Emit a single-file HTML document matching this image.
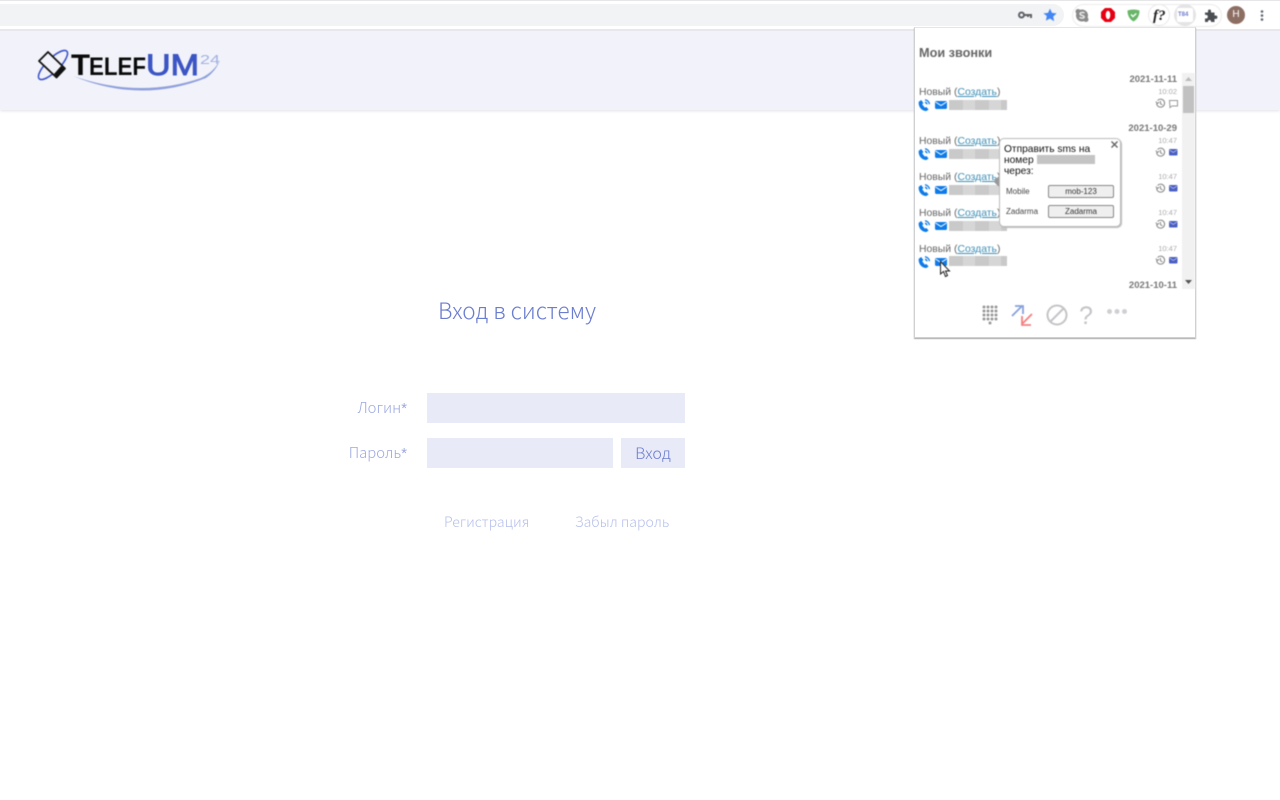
<!DOCTYPE html>
<html lang="ru"><head><meta charset="utf-8"><title>Вход в систему</title>
<style>
html,body{margin:0;padding:0;width:1280px;height:800px;overflow:hidden;background:#fff;font-family:"Liberation Sans",sans-serif}
.a{position:absolute}
.t{position:absolute;white-space:nowrap;line-height:1}
.f{background:#e8eaf7}
.n{font-family:'Noto Sans CJK JP','Liberation Sans',sans-serif;font-weight:300}
.s{font-family:'Liberation Sans',sans-serif}
.g{color:#666;font-size:10.4px}
.l{color:#3f8fb5;text-decoration:underline}
.d{color:#777;font-size:9.5px;font-weight:bold}
.h{color:#aaa;font-size:7.5px}
.r{background:repeating-linear-gradient(90deg,#c9c9c9 0 14px,#d6d6d6 14px 26px);height:10px}
svg{position:absolute;overflow:visible}
.b{position:absolute;left:0;top:0;width:1280px;height:800px}
.b1{filter:blur(.45px)}
</style></head><body>
<!-- browser chrome -->
<div class="a" style="left:0;top:0;width:1280px;height:1px;background:#e6e6e8"></div>
<div class="a" style="left:0;top:4px;width:1064px;height:22px;background:#f1f3f4;border-radius:0 12px 12px 0"></div>
<div class="a" style="left:0;top:29px;width:1280px;height:2px;background:#e8e9ed"></div>
<div class="b b1">
<div class="a" style="left:1072px;top:4px;width:150px;height:23px;border:1px solid #ebebeb;border-radius:13px;box-sizing:border-box"></div>
<svg style="left:1018px;top:10px" width="14" height="10"><circle cx="3.500" cy="5" r="2.500" fill="none" stroke="#5f6368" stroke-width="2"/><path d="M6 5h7v3M10 5v2" fill="none" stroke="#5f6368" stroke-width="2"/></svg>
<svg style="left:1043px;top:8px" width="14" height="14" viewBox="0 0 24 24"><path d="M12 1l3.400 7.300 7.900 1-5.800 5.500 1.500 7.900L12 18l-7 3.700 1.500-7.900L.7 9.300l7.900-1z" fill="#4285f4"/></svg>
<svg style="left:1075px;top:8px" width="14" height="15" viewBox="0 0 14 15"><circle cx="7" cy="7.500" r="6" fill="#8a8a8a"/><circle cx="3" cy="3.500" r="2.500" fill="#8a8a8a"/><circle cx="11" cy="11.500" r="2.500" fill="#8a8a8a"/><path d="M9.500 5.200C8.500 4 4.800 4.200 5 6c.2 1.700 4.300 1 4.200 3C9 10.500 5.500 10.500 4.500 9.200" fill="none" stroke="#e8e8e8" stroke-width="1.500"/></svg>
<svg style="left:1101px;top:8px" width="14" height="14" viewBox="0 0 14 14"><path d="M4 0h6l4 4v6l-4 4H4L0 10V4z" fill="#e60012"/><ellipse cx="7" cy="7" rx="2.300" ry="4.300" fill="#fff"/></svg>
<svg style="left:1127px;top:9px" width="13" height="13" viewBox="0 0 13 13"><path d="M.5 1.500Q6.500-.5 12.500 1.500 12.500 9 6.500 12.500.5 9 .5 1.500z" fill="#68b66a"/><path d="M4 5.500l2 2 3.300-3" fill="none" stroke="#fff" stroke-width="1.400"/></svg>
<div class="a" style="left:1148px;top:4px;width:22px;height:22px;border-radius:50%;border:1px solid #e8e8e8;box-sizing:border-box"></div>
<div class="t" style="left:1153px;top:8px;font:italic bold 15px 'Liberation Serif',serif;color:#222">f?</div>
<div class="a" style="left:1174px;top:4px;width:22px;height:22px;border-radius:50%;background:#e4e4e6"></div>
<div class="a" style="left:1177px;top:8px;width:16px;height:14px;background:#fff;border-radius:2px"></div>
<div class="t" style="left:1178px;top:12px;font-size:6px;font-weight:bold;color:#6d7ccc">T84</div>
<svg style="left:1204px;top:9px" width="13" height="13" viewBox="0 0 13 13"><path d="M1 3.500h3V2a1.500 1.500 0 0 1 3 0v1.500h3.500V6.500h1.200a1.700 1.700 0 0 1 0 3.400h-1.200V13H7v-1a1.600 1.600 0 0 0-3 0v1H1V9.500h1a1.800 1.800 0 0 0 0-3.600H1z" fill="#4a4d52"/></svg>
<div class="a" style="left:1227px;top:6px;width:18px;height:18px;border-radius:50%;background:#8d6e63;color:#fff;font-size:10px;line-height:18px;text-align:center">H</div>
<svg style="left:1260px;top:10px" width="4" height="11"><circle cx="2" cy="1.500" r="1.300" fill="#5f6368"/><circle cx="2" cy="5.500" r="1.300" fill="#5f6368"/><circle cx="2" cy="9.500" r="1.300" fill="#5f6368"/></svg>
</div>

<!-- header -->
<div class="a" style="left:0;top:31px;width:1280px;height:79px;background:#f2f3fa;box-shadow:0 1px 3px #e2e2e6"></div>
<div class="b b1">
<svg style="left:36px;top:49px" width="186" height="44" viewBox="0 0 186 44">
<ellipse cx="17" cy="16" rx="19.500" ry="6.500" transform="rotate(-45 17 16)" fill="none" stroke="#3e55c8" stroke-width="1.600"/>
<path d="M3 12L12 3l17 16.500-8.500 9z" fill="#f2f3fa" stroke="#111" stroke-width="1.800" stroke-linejoin="round"/>
<path d="M18 25l7-8 4 3-8 8z" fill="#111"/>
<path d="M37 27Q104 55 170 29 180 22 184 11 178 23 165 29 104 50 37 27z" fill="#8f9fdc"/>
<text x="35" y="26" font-family="Liberation Sans" font-weight="bold" font-size="30" fill="#0a0a0a" textLength="19" lengthAdjust="spacingAndGlyphs">T</text>
<text x="53" y="26" font-family="Liberation Sans" font-weight="bold" font-size="25" fill="#0a0a0a" textLength="57" lengthAdjust="spacingAndGlyphs">ELEF</text>
<text x="110" y="26" font-family="Liberation Sans" font-size="30" fill="#3c55c4" stroke="#3c55c4" stroke-width="1" textLength="53" lengthAdjust="spacingAndGlyphs">UM</text>
<text x="164" y="15" font-family="Liberation Sans" font-size="13" fill="#a3b0e2" textLength="20" lengthAdjust="spacingAndGlyphs">24</text>
</svg>
</div>

<!-- login -->
<div class="t n" style="left:438px;top:297px;font-size:22.500px;color:#6b7dcf;line-height:26px">Вход в систему</div>
<div class="t n" style="left:300px;width:107px;text-align:right;top:401px;font-size:14.800px;color:#9ca8e0">Логин<span class="s">*</span></div>
<div class="t n" style="left:300px;width:107px;text-align:right;top:446px;font-size:14.800px;color:#9ca8e0">Пароль<span class="s">*</span></div>
<div class="a f" style="left:427px;top:393px;width:258px;height:30px"></div>
<div class="a f" style="left:427px;top:438px;width:186px;height:30px"></div>
<div class="a f n" style="left:621px;top:438px;width:64px;height:30px;color:#6b7dcf;font-size:16px;line-height:28px;text-align:center">Вход</div>
<div class="t n" style="left:444px;top:515px;font-size:14.100px;color:#b6c0ea">Регистрация</div>
<div class="t n" style="left:575px;top:515px;font-size:14.100px;color:#b6c0ea">Забыл пароль</div>

<!-- popup -->
<div class="a" style="left:914px;top:27px;width:282px;height:311px;background:#fff;box-sizing:border-box;border:1px solid #cfd0d2;border-top:1px solid #dfe4fb;box-shadow:0 1px 1px #aaa"></div>
<div class="b b1">
<div class="t" style="left:919px;top:47px;font-size:12.700px;font-weight:bold;color:#666">Мои звонки</div>
<div class="a" style="left:1182px;top:73px;width:13px;height:216px;background:#f1f1f1"></div>
<div class="a" style="left:1183px;top:86px;width:11px;height:27px;background:#c1c1c1"></div>
<svg style="left:1185px;top:77px" width="7" height="5"><path d="M0 4L3.500 0 7 4z" fill="#bbb"/></svg>
<svg style="left:1185px;top:280px" width="7" height="5"><path d="M0 0h7L3.500 4z" fill="#555"/></svg>

<svg width="0" height="0"><defs>
<g id="p"><path d="M.8 2.700L3.200 1l2.200 3-1.200 1.400 2.600 3.200 1.600-.6 2.200 2.500-2.200 1.500C3 12 0 6.500.8 2.700z" fill="#0f7be8"/><path d="M7 .8a4.800 4.800 0 0 1 4.400 4.400M7 3.300a2.400 2.400 0 0 1 2 2" fill="none" stroke="#0f7be8" stroke-width="1.300"/></g>
<g id="m"><rect width="12" height="8" rx="1.500" fill="#0f7be8"/><path d="M.5 1L6 4.500 11.500 1" fill="none" stroke="#fff" stroke-width="1"/></g>
<g id="c"><path d="M2.600 2.500a4 4 0 1 1-1 3M.8 3.500L2.400 5.500 4.300 4M5.500 3v2.800l2 1" fill="none" stroke="#888" stroke-width="1"/></g>
<g id="e"><rect width="8.500" height="6.500" rx="1" fill="#4a5fc1"/><path d="M.5 1L4.250 3.500 8 1" fill="none" stroke="#d0d5f2" stroke-width=".7"/></g>
</defs></svg>

<!-- rows -->
<div class="t d" style="right:103px;top:75px">2021-11-11</div>
<div class="t h" style="right:103px;top:88px">10:02</div>
<div class="t g" style="left:919px;top:88px">Новый (<span class="l">Создать</span>)</div>
<svg style="left:918px;top:99px" width="14" height="14"><use href="#p"/></svg><svg style="left:935px;top:101px" width="12" height="8"><use href="#m"/></svg>
<div class="a r" style="left:949px;top:100px;width:58px"></div>
<svg style="left:1155px;top:98px" width="11" height="11"><use href="#c"/></svg>
<svg style="left:1169px;top:100px" width="9" height="8"><path d="M.5.500h8v5.500H3L1 7.500z" fill="none" stroke="#999"/></svg>

<div class="t d" style="right:103px;top:124px">2021-10-29</div>
<div class="t h" style="right:103px;top:137px">10:47</div>
<div class="t g" style="left:919px;top:137px">Новый (<span class="l">Создать</span>)</div>
<svg style="left:918px;top:148px" width="14" height="14"><use href="#p"/></svg><svg style="left:935px;top:150px" width="12" height="8"><use href="#m"/></svg>
<div class="a r" style="left:949px;top:149px;width:58px"></div>
<svg style="left:1155px;top:147px" width="11" height="11"><use href="#c"/></svg><svg style="left:1169px;top:149px" width="9" height="7"><use href="#e"/></svg>

<div class="t h" style="right:103px;top:173px">10:47</div>
<div class="t g" style="left:919px;top:173px">Новый (<span class="l">Создать</span>)</div>
<svg style="left:918px;top:184px" width="14" height="14"><use href="#p"/></svg><svg style="left:935px;top:186px" width="12" height="8"><use href="#m"/></svg>
<div class="a r" style="left:949px;top:185px;width:58px"></div>
<svg style="left:1155px;top:183px" width="11" height="11"><use href="#c"/></svg><svg style="left:1169px;top:185px" width="9" height="7"><use href="#e"/></svg>

<div class="t h" style="right:103px;top:209px">10:47</div>
<div class="t g" style="left:919px;top:209px">Новый (<span class="l">Создать</span>)</div>
<svg style="left:918px;top:220px" width="14" height="14"><use href="#p"/></svg><svg style="left:935px;top:222px" width="12" height="8"><use href="#m"/></svg>
<div class="a r" style="left:949px;top:221px;width:58px"></div>
<svg style="left:1155px;top:219px" width="11" height="11"><use href="#c"/></svg><svg style="left:1169px;top:221px" width="9" height="7"><use href="#e"/></svg>

<div class="t h" style="right:103px;top:245px">10:47</div>
<div class="t g" style="left:919px;top:245px">Новый (<span class="l">Создать</span>)</div>
<svg style="left:918px;top:256px" width="14" height="14"><use href="#p"/></svg><svg style="left:935px;top:258px" width="12" height="8"><use href="#m"/></svg>
<div class="a r" style="left:949px;top:256px;width:58px"></div>
<svg style="left:1155px;top:255px" width="11" height="11"><use href="#c"/></svg><svg style="left:1169px;top:257px" width="9" height="7"><use href="#e"/></svg>
<div class="t d" style="right:103px;top:281px">2021-10-11</div>

<!-- tooltip -->
<div class="a" style="left:995px;top:178px;width:7px;height:7px;background:#999;transform:rotate(45deg)"></div>
<div class="a" style="left:999px;top:138px;width:122px;height:89px;background:#fff;border:1px solid #bbb;border-radius:5px;box-sizing:border-box;box-shadow:1px 1px 1px #bbb"></div>
<div class="t" style="left:1004px;top:144px;font-size:10.200px;line-height:11px;color:#111;white-space:normal;width:105px">Отправить sms на<br>номер<br>через:</div>
<div class="a" style="left:1037px;top:155px;width:58px;height:9px;background:#c4c4c4"></div>
<svg style="left:1111px;top:141px" width="7" height="7"><path d="M.5.500l6 6M6.500.500l-6 6" stroke="#666" stroke-width="1.400"/></svg>
<div class="t" style="left:1006px;top:188px;font-size:8px;color:#444">Mobile</div>
<div class="t" style="left:1006px;top:208px;font-size:8px;color:#444">Zadarma</div>
<div class="a" style="left:1048px;top:185px;width:66px;height:13px;background:#efefef;border:1px solid #888;border-radius:2px;box-sizing:border-box;font-size:8px;line-height:11px;text-align:center;color:#333">mob-123</div>
<div class="a" style="left:1048px;top:205px;width:66px;height:13px;background:#efefef;border:1px solid #888;border-radius:2px;box-sizing:border-box;font-size:8px;line-height:11px;text-align:center;color:#333">Zadarma</div>

<!-- cursor -->
<svg style="left:940px;top:261px" width="11" height="17" viewBox="0 0 11 17"><path d="M.5.500V13l3-2.500 2 5 2-1-2-4.500h4z" fill="#fff" stroke="#222" stroke-width="1"/></svg>

<!-- footer icons -->
<svg style="left:982px;top:305px" width="16" height="22" fill="#999"><circle cx="2" cy="2" r="1.500"/><circle cx="6" cy="2" r="1.500"/><circle cx="10" cy="2" r="1.500"/><circle cx="14" cy="2" r="1.500"/><circle cx="2" cy="6" r="1.500"/><circle cx="6" cy="6" r="1.500"/><circle cx="10" cy="6" r="1.500"/><circle cx="14" cy="6" r="1.500"/><circle cx="2" cy="10" r="1.500"/><circle cx="6" cy="10" r="1.500"/><circle cx="10" cy="10" r="1.500"/><circle cx="14" cy="10" r="1.500"/><circle cx="2" cy="14" r="1.500"/><circle cx="6" cy="14" r="1.500"/><circle cx="10" cy="14" r="1.500"/><circle cx="14" cy="14" r="1.500"/><circle cx="8" cy="18" r="1.500"/></svg>
<svg style="left:1011px;top:304px" width="23" height="23" fill="none" stroke-width="1.800"><path d="M1 12L11 2M4 2h8v8" stroke="#87a1dc"/><path d="M21 10L11 20M11 12v9h9" stroke="#f47f7f"/></svg>
<svg style="left:1046px;top:304px" width="22" height="22" fill="none" stroke="#c4c4c8" stroke-width="2"><circle cx="11" cy="11" r="9.500"/><path d="M4.500 17.500l13-13"/></svg>
<div class="t" style="left:1079px;top:304px;font-size:25px;color:#c4c4c8">?</div>
<svg style="left:1106px;top:308px" width="22" height="7" fill="#d0d0d4"><circle cx="3.500" cy="3.500" r="2.500"/><circle cx="11" cy="3.500" r="2.500"/><circle cx="18.500" cy="3.500" r="2.500"/></svg>
</div>
</body></html>
